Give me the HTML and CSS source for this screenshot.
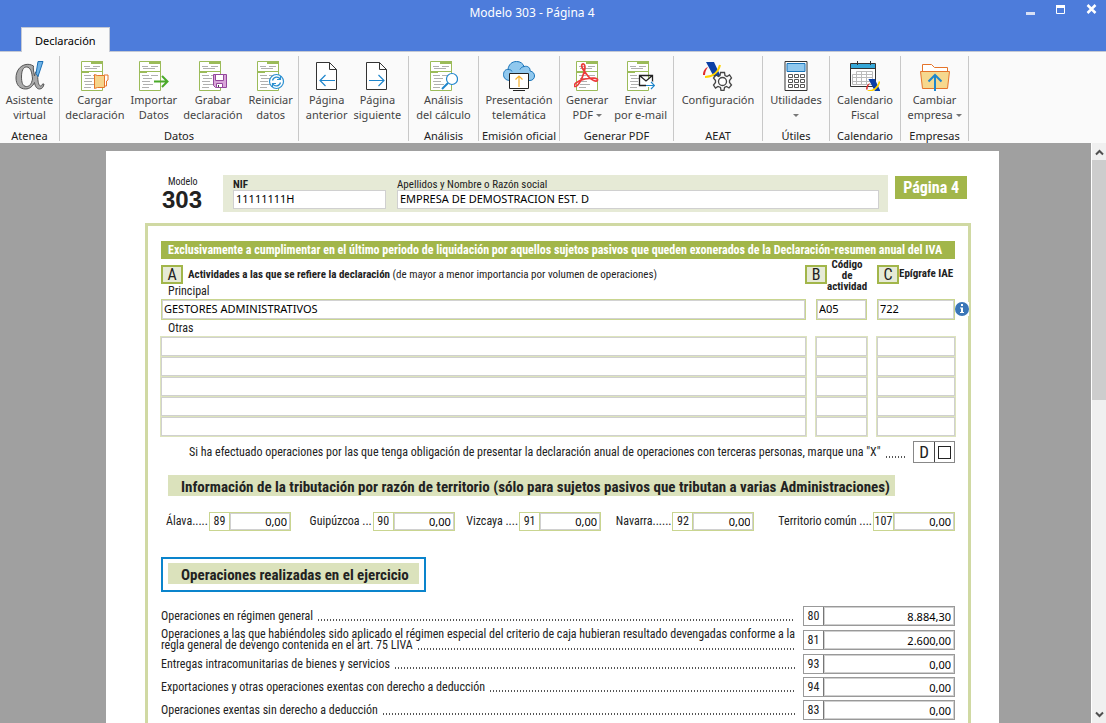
FILE: index.html
```html
<!DOCTYPE html>
<html lang="es">
<head>
<meta charset="utf-8">
<title>Modelo 303 - Página 4</title>
<link rel="stylesheet" href="styles.css">
</head>
<body>
<svg class="defs" aria-hidden="true">
  <defs>
    <g id="doc">
      <path d="M.5 .5h21v29H.5z" fill="#fff" stroke="#9bbb59"/>
      <path d="M10 0h12v3H10zM0 10h22v1H0zM0 10h8v2H0z" fill="#9bbb59"/>
      <path d="M3 5.500h6M12 5.500h7M4 7.500h12M3 14.500h7M12 14.500h7M4 17.500h9M3 20.500h8M4 23.500h10M3 26.500h7" stroke="#b0b0b0" fill="none"/>
    </g>
    <g id="aeat">
      <path d="M3 0h8l7 15h-7z" fill="#0b3fa5"/>
      <path d="M0 13c0-4 2-7 5-8-2 3-3 5-3 8z" fill="#e02b2b"/>
      <path d="M2 15c7 0 13-4 15-12" fill="none" stroke="#ffd200" stroke-width="2"/>
    </g>
  </defs>
</svg>

<header class="titlebar">
  <h1 class="title">Modelo 303 - Página 4</h1>
  <div class="window-buttons">
    <button class="window-button" aria-label="Minimizar"><svg width="10" height="12"><path d="M0 8h9v3H0z" fill="#d8e0f5"/></svg></button>
    <button class="window-button" aria-label="Maximizar"><svg width="10" height="12"><path d="M.5 3h8v6.500h-8z" fill="none" stroke="#fff"/><path d="M0 1h9v3H0z" fill="#fff"/></svg></button>
    <button class="window-button" aria-label="Cerrar"><svg width="12" height="12"><path d="M1.500 1l8 8M9.500 1l-8 8" stroke="#fff" stroke-width="2.500"/></svg></button>
  </div>
  <nav class="tabs"><button class="tab">Declaración</button></nav>
</header>

<div class="ribbon">
  <section class="group">
    <div class="tools">
      <button class="tool"><svg class="icon" width="30" height="30" viewBox="0 0 30 30"><path d="M18.500 5C16 3.500 13.500 3 11 3.500 5 4.500 1 10 1 17c0 6.500 3.500 11 9.500 11 4 0 7-2.500 9-6.500.5 4 2.500 6.500 5 6.500 2.500 0 4-2 4.500-5h-1.500c-.5 1.500-1 2-1.800 2-1.700 0-2.700-3-3-8.500L23.500 11h-3l-1 4C18.500 10 18 7.500 18.500 5zM11.500 6c4 0 5.500 5 6 12-1 5-3 7.500-6 7.500-4 0-5-4.500-5-9.500C6.500 10 8 6 11.500 6z" fill="#aaa" stroke="#555" fill-rule="evenodd"/><path d="M23 .5h5l-5 15-2-3z" fill="#6fb3e6" stroke="#1b6fb5"/></svg><span>Asistente<br>virtual</span></button>
    </div>
    <h2 class="caption">Atenea</h2>
  </section>
  <section class="group">
    <div class="tools">
      <button class="tool"><svg class="icon" width="28" height="30" viewBox="0 0 28 30"><use href="#doc"/><path d="M23 14h4v5l-1.500 1v5H23" fill="#fff" stroke="#e5742a"/><path d="M13.500 13.500l3 1h7v12h-7l-3 1z" fill="#f6d48b" stroke="#e5742a"/></svg><span>Cargar<br>declaración</span></button>
      <button class="tool"><svg class="icon" width="30" height="30" viewBox="0 0 30 30"><use href="#doc"/><path d="M15 20.500h13M23 15l5.500 5.500L23 26" fill="none" stroke="#4aaa2a" stroke-width="2"/></svg><span>Importar<br>Datos</span></button>
      <button class="tool"><svg class="icon" width="28" height="30" viewBox="0 0 28 30"><use href="#doc"/><path d="M14.500 13.500h13v13h-11l-2-2z" fill="#d9a5d9" stroke="#93479c"/><path d="M16.500 13.500h8v6h-8zM17.500 22.500h6v4h-6z" fill="#fff" stroke="#93479c"/><path d="M19 24h1v2h-1z" fill="#444"/></svg><span>Grabar<br>declaración</span></button>
      <button class="tool"><svg class="icon" width="28" height="30" viewBox="0 0 28 30"><use href="#doc"/><circle cx="19.500" cy="20.500" r="7" fill="#fff" stroke="#2a8fd0" stroke-width="1.200"/><path d="M15.500 19.500c1-4 6-4.500 7.500-1.500M23.500 15v3.500H20M23.500 21.500c-1 4-6 4.500-7.500 1.500M15.500 26v-3.500H19" fill="none" stroke="#2a8fd0" stroke-width="1.200"/></svg><span>Reiniciar<br>datos</span></button>
    </div>
    <h2 class="caption">Datos</h2>
  </section>
  <section class="group">
    <div class="tools">
      <button class="tool"><svg class="icon" width="24" height="30" viewBox="0 0 24 30"><path d="M1.500 1.500h13l7 7v20h-20zM14.500 1.500v7h7" fill="#fff" stroke="#333"/><path d="M5 19.500h15M10.500 14L5 19.500l5.500 5.500" fill="none" stroke="#1f86cc" stroke-width="1.200"/></svg><span>Página<br>anterior</span></button>
      <button class="tool"><svg class="icon" width="24" height="30" viewBox="0 0 24 30"><path d="M1.500 1.500h13l7 7v20h-20zM14.500 1.500v7h7" fill="#fff" stroke="#333"/><path d="M4 19.500h15M13.500 14l5.500 5.500-5.500 5.500" fill="none" stroke="#1f86cc" stroke-width="1.200"/></svg><span>Página<br>siguiente</span></button>
    </div>
  </section>
  <section class="group">
    <div class="tools">
      <button class="tool"><svg class="icon" width="28" height="30" viewBox="0 0 28 30"><use href="#doc"/><path d="M18 22l-6 6" stroke="#1f86cc" stroke-width="2"/><circle cx="22" cy="18" r="5.500" fill="#fff" stroke="#1f86cc" stroke-width="1.200"/></svg><span>Análisis<br>del cálculo</span></button>
    </div>
    <h2 class="caption">Análisis</h2>
  </section>
  <section class="group">
    <div class="tools">
      <button class="tool"><svg class="icon" width="32" height="30" viewBox="0 0 32 30"><path d="M7 19.500C3 19.500.500 17 .500 13.500S3 8 5 8.500C5.500 3.500 9 .500 13.500.500c4 0 6.500 2 7.500 5 4-1 6.500 1.500 6 4.500 3 .5 4.500 2.500 4.500 5s-2 4.500-4.500 4.500z" fill="#90c8ee" stroke="#1873b8"/><path d="M5 8.500c2 0 3.500.5 4 2M21 5.500c-2 .5-3.500 1.500-4 3" fill="none" stroke="#1873b8"/><path d="M6.500 12.500h19v15h-19z" fill="#fff" stroke="#222"/><path d="M10 29.500h12" stroke="#222"/><path d="M16 26V15M12.500 18.500L16 15l3.500 3.500" fill="none" stroke="#f5b02e" stroke-width="1.200"/></svg><span>Presentación<br>telemática</span></button>
    </div>
    <h2 class="caption">Emisión oficial</h2>
  </section>
  <section class="group">
    <div class="tools">
      <button class="tool"><svg class="icon" width="26" height="30" viewBox="0 0 26 30"><g transform="translate(2)"><use href="#doc"/></g><path d="M8 3.500c2.500-2 4 2 2 8C8 18 4 26 1 25.500c-2.500-1 2-6 10-7.500 7-1.500 13-1 12.500 1-.5 2.500-6.500.5-10-4.500-3.500-4.500-7-9-5.500-11z" fill="none" stroke="#ec3b3b" stroke-width="1.700"/></svg><span>Generar<br>PDF <i class="arrow"></i></span></button>
      <button class="tool"><svg class="icon" width="28" height="30" viewBox="0 0 28 30"><use href="#doc"/><path d="M12.500 14.500h13v10h-13zM12.500 14.500l6.500 5.500 6.500-5.500" fill="#fff" stroke="#222" stroke-width="1.300"/><path d="M19 24.500h8M24 21l3.500 3.500L24 28" fill="none" stroke="#fff" stroke-width="3"/><path d="M19 24.500h8M24 21l3.500 3.500L24 28" fill="none" stroke="#1f86cc" stroke-width="1.200"/></svg><span>Enviar<br>por e-mail</span></button>
    </div>
    <h2 class="caption">Generar PDF</h2>
  </section>
  <section class="group">
    <div class="tools">
      <button class="tool"><svg class="icon" width="30" height="30" viewBox="0 0 30 30"><g transform="translate(0 1)"><use href="#aeat"/></g><path d="M17.500 11.500h4l.5 3 2 1 2.500-1.500 2 3-2 2.500v2l2 2.500-2.500 3-2.500-1.500-2 1-.5 3h-3l-.5-3-2.500-1-2.500 1.500-2-3 2-2.500v-2l-2-2.500 2.500-3 2.500 1.500 1.500-1z" fill="#fafafa" stroke="#444" stroke-width="1.300"/><circle cx="19.500" cy="20.500" r="4" fill="#fff" stroke="#444" stroke-width="1.300"/></svg><span>Configuración<br>&nbsp;</span></button>
    </div>
    <h2 class="caption">AEAT</h2>
  </section>
  <section class="group">
    <div class="tools">
      <button class="tool"><svg class="icon" width="24" height="30" viewBox="0 0 24 30"><path d="M1 .5h22v29H1z" fill="#fff" stroke="#333"/><path d="M3 2.500h18v8H3z" fill="#90c8ee" stroke="#1873b8"/><path d="M4.500 13.500h4v3h-4zM10.500 13.500h4v3h-4zM16.500 13.500h4v3h-4zM4.500 18.500h4v3h-4zM10.500 18.500h4v3h-4zM16.500 18.500h4v3h-4zM4.500 23.500h4v3h-4zM10.500 23.500h4v3h-4zM16.500 23.500h4v3h-4z" fill="none" stroke="#555"/></svg><span>Utilidades<br><i class="arrow"></i></span></button>
    </div>
    <h2 class="caption">Útiles</h2>
  </section>
  <section class="group">
    <div class="tools">
      <button class="tool"><svg class="icon" width="30" height="30" viewBox="0 0 30 30"><path d="M.500 2.500h25v23H.500z" fill="#fff" stroke="#333"/><path d="M1 3h24v4H1z" fill="#35a7d8"/><path d="M1 7.500h24M7.500 0v4M20.500 0v4" stroke="#333"/><path d="M2.500 13.500h20v10h-20zM6.500 10.500h16v3h-16zM2.500 16.500h20M2.500 20.500h20M6.500 13v10M11.500 10v13M16.500 10v13" fill="none" stroke="#bbb"/><g transform="translate(16 18) scale(.8)"><use href="#aeat"/></g></svg><span>Calendario<br>Fiscal</span></button>
    </div>
    <h2 class="caption">Calendario</h2>
  </section>
  <section class="group">
    <div class="tools">
      <button class="tool"><svg class="icon" width="30" height="30" viewBox="0 0 30 30"><path d="M2.500 11V3.500h9l3 3h13V11" fill="#fff" stroke="#e5742a"/><path d="M.500 10.500h29l-2 17h-25z" fill="#f6d88e" stroke="#e5742a"/><path d="M15 30V15M8.500 20.500L15 14l6.500 6.500" fill="none" stroke="#1f86cc" stroke-width="2"/></svg><span>Cambiar<br>empresa <i class="arrow"></i></span></button>
    </div>
    <h2 class="caption">Empresas</h2>
  </section>
</div>

<div class="workspace">
  <main class="viewport">
    <form class="sheet">
      <div class="sheet-head">
        <div class="model"><span class="model-label">Modelo</span><strong class="model-number">303</strong></div>
        <div class="identity">
          <label class="id-field"><b>NIF</b><input class="entry" value="11111111H"></label>
          <label class="id-field">Apellidos y Nombre o Razón social<input class="entry" value="EMPRESA DE DEMOSTRACION EST. D"></label>
        </div>
        <strong class="page-badge">Página 4</strong>
      </div>

      <div class="frame">
        <h3 class="notice">Exclusivamente a cumplimentar en el último periodo de liquidación por aquellos sujetos pasivos que queden exonerados de la Declaración-resumen anual del IVA</h3>

        <div class="activity-head">
          <div>
            <div class="heading"><span class="key">A</span><p class="heading-text"><b>Actividades a las que se refiere la declaración</b> (de mayor a menor importancia por volumen de operaciones)</p></div>
            <label class="sub-label" for="principal">Principal</label>
          </div>
          <div class="column-head"><span class="key">B</span><b class="stacked">Código<br>de<br>actividad</b></div>
          <div class="column-head"><span class="key">C</span><b>Epígrafe IAE</b></div>
        </div>
        <div class="activity">
          <input class="entry green" id="principal" value="GESTORES ADMINISTRATIVOS">
          <input class="entry green" aria-label="Código de actividad" value="A05">
          <div class="with-info"><input class="entry green" aria-label="Epígrafe IAE" value="722"><button type="button" class="info" aria-label="Información"><svg width="14" height="14"><circle cx="7" cy="7" r="7" fill="#3a76b8"/><path d="M6 2h2v2H6zM5 5.500h3v4.500h1v1H5v-1h1V6.500H5z" fill="#fff"/></svg></button></div>
        </div>
        <p class="sub-label others-label">Otras</p>
        <div class="activity others">
          <input class="entry" aria-label="Otra actividad 1"><input class="entry" aria-label="Código 1"><input class="entry" aria-label="Epígrafe 1">
          <input class="entry" aria-label="Otra actividad 2"><input class="entry" aria-label="Código 2"><input class="entry" aria-label="Epígrafe 2">
          <input class="entry" aria-label="Otra actividad 3"><input class="entry" aria-label="Código 3"><input class="entry" aria-label="Epígrafe 3">
          <input class="entry" aria-label="Otra actividad 4"><input class="entry" aria-label="Código 4"><input class="entry" aria-label="Epígrafe 4">
          <input class="entry" aria-label="Otra actividad 5"><input class="entry" aria-label="Código 5"><input class="entry" aria-label="Epígrafe 5">
        </div>

        <div class="third-parties">
          <label for="terceros">Si ha efectuado operaciones por las que tenga obligación de presentar la declaración anual de operaciones con terceras personas, marque una "X"</label>
          <span class="leader" aria-hidden="true"></span>
          <span class="mark"><span class="mark-key">D</span><span class="mark-box"><input type="checkbox" class="check" id="terceros"></span></span>
        </div>

        <h3 class="band wide">Información de la tributación por razón de territorio (sólo para sujetos pasivos que tributan a varias Administraciones)</h3>

        <div class="territories">
          <label class="territory">Álava.....<span class="amount"><span class="code">89</span><input class="entry number" value="0,00"></span></label>
          <label class="territory">Guipúzcoa ...<span class="amount"><span class="code">90</span><input class="entry number" value="0,00"></span></label>
          <label class="territory">Vizcaya ....<span class="amount"><span class="code">91</span><input class="entry number" value="0,00"></span></label>
          <label class="territory">Navarra......<span class="amount"><span class="code">92</span><input class="entry number" value="0,00"></span></label>
          <label class="territory">Territorio común ....<span class="amount"><span class="code">107</span><input class="entry number" value="0,00"></span></label>
        </div>

        <div class="selected"><h3 class="band">Operaciones realizadas en el ejercicio</h3></div>

        <div class="operations">
          <label class="operation"><span>Operaciones en régimen general</span><span class="leader" aria-hidden="true"></span><span class="amount"><span class="code">80</span><input class="entry number" value="8.884,30"></span></label>
          <label class="operation two-line"><span class="first-line">Operaciones a las que habiéndoles sido aplicado el régimen especial del criterio de caja hubieran resultado devengadas conforme a la</span><span class="second-line">regla general de devengo contenida en el art. 75 LIVA<span class="leader" aria-hidden="true"></span></span><span class="amount"><span class="code">81</span><input class="entry number" value="2.600,00"></span></label>
          <label class="operation"><span>Entregas intracomunitarias de bienes y servicios</span><span class="leader" aria-hidden="true"></span><span class="amount"><span class="code">93</span><input class="entry number" value="0,00"></span></label>
          <label class="operation"><span>Exportaciones y otras operaciones exentas con derecho a deducción</span><span class="leader" aria-hidden="true"></span><span class="amount"><span class="code">94</span><input class="entry number" value="0,00"></span></label>
          <label class="operation"><span>Operaciones exentas sin derecho a deducción</span><span class="leader" aria-hidden="true"></span><span class="amount"><span class="code">83</span><input class="entry number" value="0,00"></span></label>
          <div class="operation"><span class="amount"><span class="code"></span><input class="entry number" aria-label="Siguiente operación"></span></div>
        </div>
      </div>
    </form>
  </main>
  <div class="scrollbar">
    <button class="scroll-button" aria-label="Subir"><svg width="9" height="8"><path d="M1 6.500L4.500 3 8 6.500" fill="none" stroke="#505050" stroke-width="2"/></svg></button>
    <div class="track"><div class="thumb"></div></div>
    <button class="scroll-button" aria-label="Bajar"><svg width="9" height="8"><path d="M1 1.500L4.500 5 8 1.500" fill="none" stroke="#505050" stroke-width="2"/></svg></button>
  </div>
</div>
</body>
</html>
```

FILE: styles.css
```css
* { box-sizing: border-box; }
body {
  margin: 0;
  height: 100vh;
  display: flex;
  flex-direction: column;
  overflow: hidden;
  font: 11px/15px "Noto Sans", "Open Sans", sans-serif;
  color: #222;
  background: #fafafa;
}
h1, h2, h3, p { margin: 0; font: inherit; }
button { border: 0; padding: 0; background: none; font: inherit; color: inherit; }
input { font: inherit; color: #000; min-width: 0; }
.defs { position: absolute; width: 0; height: 0; }

/* Title bar */
.titlebar {
  display: grid;
  grid-template-columns: 1fr auto 1fr;
  grid-template-rows: 27px 24px;
  background: #4d7cdb;
  border-bottom: 1px solid #c4c9d4;
}
.title { grid-column: 2; padding-right: 42px; font-size: 12px; line-height: 26px; color: #fff; }
.window-buttons { display: flex; justify-content: flex-end; gap: 20px; padding: 4px 8px 0 0; }
.window-button { display: flex; align-items: flex-start; }
.tabs { grid-column: 1; padding-left: 21px; }
.tab { height: 25px; padding: 0 13px; background: #fafafa; border: 1px solid #c4c9d4; border-bottom: 0; color: #000; }

/* Ribbon */
.ribbon {
  display: grid;
  grid-template-columns: 60px 239px 110px 70px 81px 114px 89px 67px 71px 68px;
  height: 91px;
  flex: none;
  padding-top: 4px;
  color: #444;
}
.group {
  display: flex;
  flex-direction: column;
  justify-content: space-between;
  border-right: 1px solid transparent;
  border-image: linear-gradient(#c8c8c8 84px, transparent 84px) 1;
}
.tools { display: flex; justify-content: center; }
.tool { display: flex; flex-direction: column; align-items: center; gap: 1px; padding: 5px 3px 0; white-space: nowrap; }
.icon { display: block; }
.caption { text-align: center; color: #222; white-space: nowrap; }
.arrow { display: inline-block; border: 3px solid transparent; border-top-color: #777; border-bottom: 0; vertical-align: 2px; }

/* Workspace */
.workspace { flex: 1; min-height: 0; display: flex; }
.viewport { flex: 1; overflow: hidden; background: #a0a0a0; padding: 8px 92px 0 106px; }
.sheet {
  background: #fff;
  padding: 24px 28px 40px 39px;
  font: 12px/15px "Roboto Condensed", "Liberation Sans Narrow", sans-serif;
}
.scrollbar { width: 15px; display: flex; flex-direction: column; background: #f0f0f0; border-left: 1px solid #fff; }
.scroll-button { height: 17px; display: flex; align-items: center; justify-content: center; }
.track { flex: 1; }
.thumb { height: 44%; background: #cdcdcd; }

.entry {
  display: block;
  width: 100%;
  height: 19px;
  padding: 0 2px 2px;
  border: 1px solid #d0d0d0;
  border-radius: 0;
  background: #fff;
  font: 11px/15px "Noto Sans", "Open Sans", sans-serif;
}
.green { height: 21px; border-color: #c9d590; box-shadow: inset 0 0 0 1px #d2d2d2; }
.number { padding-bottom: 0; text-align: right; }

/* Sheet heading */
.sheet-head { display: flex; align-items: flex-start; padding: 0 4px 0 17px; }
.model { width: 61px; display: flex; flex-direction: column; }
.model-label { padding-left: 6px; font-size: 10px; line-height: 14px; }
.model-number { font: bold 24px/22px "Liberation Sans", sans-serif; }
.identity { flex: 1; display: grid; grid-template-columns: 153px 1fr; gap: 11px; padding: 4px 9px 3px 10px; background: #e6ead6; margin-right: 7px; }
.id-field { font-size: 11px; line-height: 11px; }
.page-badge { padding: 0 8px; margin-top: 1px; line-height: 23px; font-size: 16px; color: #fff; background: #a2b64a; }

/* Form frame */
.frame { margin-top: 11px; padding: 15px 13px 0; border: 3px solid #d0d9a3; }
.notice { height: 18px; padding-left: 7px; font-weight: bold; line-height: 18px; color: #fff; background: #a2b64a; white-space: nowrap; }
.activity-head { display: grid; grid-template-columns: 1fr 72px 78px; height: 40px; font-size: 11px; }
.heading { display: flex; gap: 5px; padding-top: 6px; }
.heading-text { line-height: 19px; white-space: nowrap; }
.key { width: 22px; height: 19px; flex: none; border: 2px solid #a2b64a; background: #e6ead6; font-size: 16px; line-height: 15px; text-align: center; }
.column-head { display: flex; align-items: flex-start; line-height: 17px; white-space: nowrap; padding-top: 6px; }
.stacked { text-align: center; line-height: 11px; margin-top: -6px; }
.sub-label { display: block; padding-left: 7px; font-size: 12px; }
.others-label { line-height: 17px; }
.activity { display: grid; grid-template-columns: 1fr 51px 78px; column-gap: 10px; }
.others { row-gap: 1px; }
.others .entry { box-shadow: 0 0 0 1px #dde4bd; }
.with-info { position: relative; }
.info { position: absolute; left: 100%; top: 3px; height: 14px; background: #fff; }

.leader {
  flex: 1;
  align-self: flex-end;
  height: 2px;
  margin: 0 8px 5px 5px;
  background: repeating-linear-gradient(90deg, #555 0 1px, transparent 1px 3px);
}

.third-parties { display: flex; align-items: center; margin-top: 5px; padding-left: 28px; white-space: nowrap; }
.mark { display: flex; width: 42px; height: 22px; border: 1px solid #888; }
.mark-key { width: 21px; border-right: 1px solid #444; text-align: center; font-size: 17px; line-height: 20px; }
.mark-box { flex: 1; display: flex; align-items: center; justify-content: center; }
.check { appearance: none; margin: 0; width: 13px; height: 13px; border: 1px solid #222; }

.band { height: 21px; padding-left: 13px; font-size: 15px; font-weight: bold; line-height: 25px; background: #dbe2bc; white-space: nowrap; }
.wide { margin: 12px 60px 0 7px; }

.territories { display: grid; grid-template-columns: 144fr 157fr 150fr 163fr 176fr; margin-top: 16px; padding-left: 5px; }
.territory { display: flex; align-items: center; white-space: nowrap; gap: 1px; }
.amount { display: flex; flex: none; width: 82px; border: 1px solid #c9d590; }
.code { width: 20px; flex: none; text-align: center; line-height: 17px; border-right: 1px solid #c9d590; }
.amount .entry { flex: 1; height: 17px; }

.selected { width: 265px; margin-top: 26px; padding: 4px 5px 6px; border: 2px solid #0a84cc; }

.operations { display: flex; flex-direction: column; gap: 3px; margin-top: 14px; }
.operation { display: flex; align-items: center; white-space: nowrap; }
.operation .amount { width: 152px; margin-left: auto; border-color: #999; }
.operation .code { line-height: 18px; border-color: #777; }
.operation .entry { height: 18px; }
.two-line { display: grid; grid-template-columns: 1fr 152px; line-height: 11px; }
.second-line { grid-row: 2; grid-column: 1; display: flex; }
.second-line .leader { margin-bottom: 1px; }
.two-line .amount { grid-column: 2; grid-row: 1 / 3; }
```
